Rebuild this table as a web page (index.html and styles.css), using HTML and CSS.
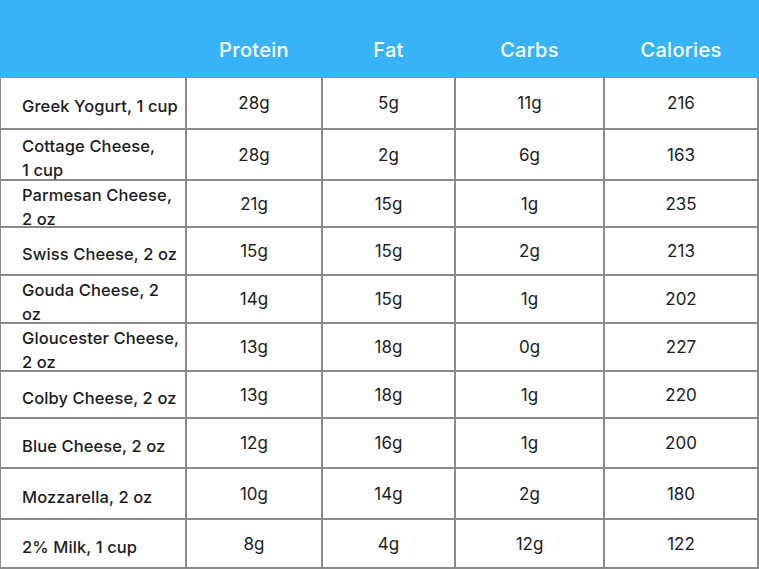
FILE: index.html
```html
<!DOCTYPE html>
<html>
<head>
<meta charset="utf-8">
<link rel="stylesheet" href="styles.css">
</head>
<body>
<div class="head">
  <span></span><span>Protein</span><span>Fat</span><span>Carbs</span><span>Calories</span>
</div>
<div class="grid">
  <div class="c lab">Greek Yogurt, 1 cup</div><div class="c">28g</div><div class="c">5g</div><div class="c">11g</div><div class="c">216</div>
  <div class="c lab">Cottage Cheese,<br>1 cup</div><div class="c">28g</div><div class="c">2g</div><div class="c">6g</div><div class="c">163</div>
  <div class="c lab">Parmesan Cheese,<br>2 oz</div><div class="c">21g</div><div class="c">15g</div><div class="c">1g</div><div class="c">235</div>
  <div class="c lab">Swiss Cheese, 2 oz</div><div class="c">15g</div><div class="c">15g</div><div class="c">2g</div><div class="c">213</div>
  <div class="c lab">Gouda Cheese, 2<br>oz</div><div class="c">14g</div><div class="c">15g</div><div class="c">1g</div><div class="c">202</div>
  <div class="c lab">Gloucester Cheese,<br>2 oz</div><div class="c">13g</div><div class="c">18g</div><div class="c">0g</div><div class="c">227</div>
  <div class="c lab">Colby Cheese, 2 oz</div><div class="c">13g</div><div class="c">18g</div><div class="c">1g</div><div class="c">220</div>
  <div class="c lab">Blue Cheese, 2 oz</div><div class="c">12g</div><div class="c">16g</div><div class="c">1g</div><div class="c">200</div>
  <div class="c lab">Mozzarella, 2 oz</div><div class="c">10g</div><div class="c">14g</div><div class="c">2g</div><div class="c">180</div>
  <div class="c lab">2% Milk, 1 cup</div><div class="c">8g</div><div class="c">4g</div><div class="c">12g</div><div class="c">122</div>
</div>
</body>
</html>
```
FILE: styles.css
```css
body {
  margin: 0;
  font-family: Inter, "Open Sans", sans-serif;
  background: #fff;
}
.head {
  display: grid;
  grid-template-columns: 184px 134px 131px 147px 152px;
  column-gap: 2px;
  padding: 0 2px 0 1px;
  height: 78px;
  background: #38b3f8;
  align-items: end;
}
.head span {
  text-align: center;
  color: #fff;
  font-size: 20px;
  font-weight: 500;
  padding-bottom: 16px;
  line-height: 24px;
  letter-spacing: 0.3px;
}
.grid {
  display: grid;
  grid-template-columns: 184px 134px 131px 147px 152px;
  grid-template-rows: 50px 49px 45px 46px 46px 46px 45px 48px 49px 47px;
  gap: 2px;
  padding: 0 2px 2px 1px;
  background: #8a8a8a;
}
.c {
  background: #fff;
  display: flex;
  align-items: center;
  justify-content: center;
  font-size: 17px;
  color: #1c1c1c;
  font-weight: 400;
}
.lab {
  justify-content: flex-start;
  padding-left: 21px;
  font-size: 16.5px;
  font-weight: 500;
  line-height: 24px;
  white-space: nowrap;
  padding-top: 6px;
  letter-spacing: 0.1px;
}
```
